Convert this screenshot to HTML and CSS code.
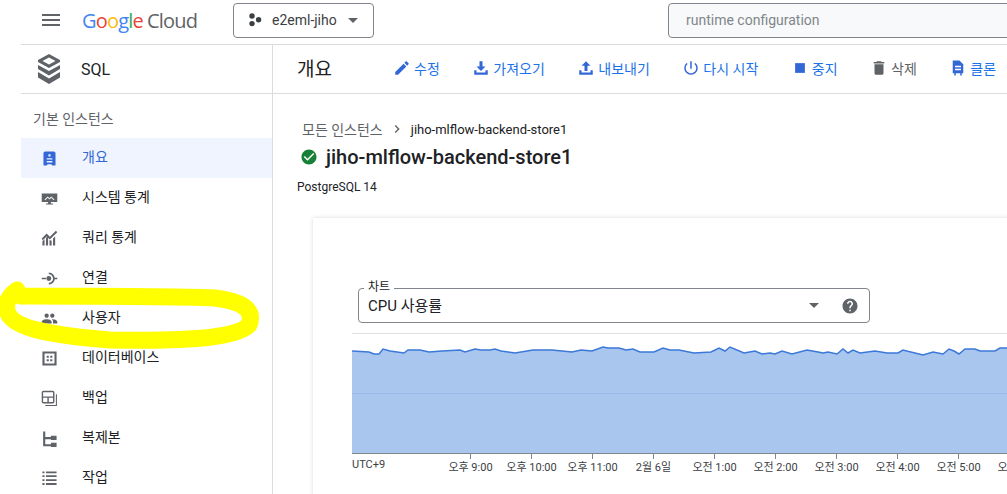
FILE: index.html
```html
<!DOCTYPE html>
<html lang="ko">
<head>
    <meta charset="UTF-8">
    <title>jiho-mlflow-backend-store1</title>
    <link rel="stylesheet" href="styles.css">
</head>
<body>
<div class="app">
    <header class="topbar">
        <svg class="menu-icon" viewBox="0 0 24 24"><path d="M3 18h18v-2H3v2zm0-5h18v-2H3v2zm0-7v2h18V6H3z"/></svg>
        <div class="logo">
            <span class="logo-google"><b class="c-blue">G</b><b class="c-red">o</b><b class="c-yellow">o</b><b class="c-blue">g</b><b class="c-green">l</b><b class="c-red">e</b></span>
            <span class="logo-cloud">Cloud</span>
        </div>
        <div class="project">
            <svg class="project-icon" viewBox="0 0 14 14"><circle cx="4" cy="3" r="2.7"/><circle cx="4" cy="10.600" r="2.7"/><circle cx="10.600" cy="6.800" r="2.7"/></svg>
            <span>e2eml-jiho</span>
            <i class="caret"></i>
        </div>
        <div class="search">runtime configuration</div>
    </header>

    <div class="subbar">
        <div class="product">
            <svg class="sql-icon" viewBox="0 0 22 30">
                <path d="M11 0l11 6v2L11 14 0 8V6zm0 3.500L4.500 7l6.500 3.500L17.500 7z" fill-rule="evenodd"/>
                <path d="M0 11l11 6 11-6v4L11 21.500 0 15z"/>
                <path d="M0 18l11 6.500L22 18v5.500L11 30 0 23.500z"/>
            </svg>
            <span>SQL</span>
        </div>
        <div class="toolbar">
            <h1>개요</h1>
            <div class="actions">
                <a class="action"><svg viewBox="0 0 24 24"><path d="M3 17.250V21h3.750L17.810 9.940l-3.750-3.750L3 17.250zM20.710 7.040c.39-.39.39-1.020 0-1.410l-2.340-2.340c-.39-.39-1.020-.39-1.410 0l-1.830 1.830 3.750 3.750 1.830-1.830z"/></svg><span>수정</span></a>
                <a class="action"><svg viewBox="0 0 24 24"><path d="M10 3h4v7h4l-6 6-6-6h4zM3 15h3v3h12v-3h3v6H3z"/></svg><span>가져오기</span></a>
                <a class="action"><svg viewBox="0 0 24 24"><path d="M12 3l6 6h-4v7h-4V9H6zM3 15h3v3h12v-3h3v6H3z"/></svg><span>내보내기</span></a>
                <a class="action"><svg viewBox="0 0 24 24"><path d="M13 3h-2v10h2V3zm4.830 2.170l-1.420 1.420C17.990 7.860 19 9.810 19 12c0 3.870-3.130 7-7 7s-7-3.130-7-7c0-2.190 1.010-4.140 2.580-5.420L6.170 5.170C4.230 6.820 3 9.260 3 12c0 4.970 4.030 9 9 9s9-4.030 9-9c0-2.740-1.230-5.180-3.170-6.830z"/></svg><span>다시 시작</span></a>
                <a class="action"><svg viewBox="0 0 24 24"><path d="M5.500 5.500h13v13h-13z"/></svg><span>중지</span></a>
                <a class="action disabled"><svg viewBox="0 0 24 24"><path d="M6 19c0 1.100.9 2 2 2h8c1.100 0 2-.9 2-2V7H6v12zM19 4h-3.500l-1-1h-5l-1 1H5v2h14V4z"/></svg><span>삭제</span></a>
                <a class="action"><svg viewBox="0 0 24 24"><path d="M5 2h9l5 5v12h-2v3h-2v-3H9v3H7v-3H5zM8 9v2h8V9zm0 4v2h8v-2z" fill-rule="evenodd"/></svg><span>클론</span></a>
            </div>
        </div>
    </div>

    <div class="content">
        <nav class="sidebar">
            <div class="nav-title">기본 인스턴스</div>
            <a class="nav-item active"><svg viewBox="0 0 24 24"><path d="M6 2h12a2.500 2.500 0 0 1 2.500 2.500V21a1 1 0 0 1-1 1H16l-1.500-2h-5L8 22H4.500a1 1 0 0 1-1-1V4.500A2.500 2.500 0 0 1 6 2zm4.500 4v3h3V6zM8 11.500v2h8v-2zM8 15.500v2h8v-2z" fill-rule="evenodd"/></svg><span>개요</span></a>
            <a class="nav-item"><svg viewBox="0 0 24 24"><path d="M1 5h22v12h-9v2h3v1.500H7V19h3v-2H1zm4 8.500l1 1 3.500-3.500 2.500 2.500 2.500-2.500 3.500 3.500 1-1-4.500-4.500-2.500 2.500L9.500 9z" fill-rule="evenodd"/></svg><span>시스템 통계</span></a>
            <a class="nav-item"><svg viewBox="0 0 24 24"><path d="M2 16l3-3v9H2zm5-5l3-2v13H7zm5 3l3 1v7h-3zm5-2l3-3v13h-3zM1 12l7-7 4.500 4.500L21 1l2 2-10.500 10.500L8 9l-5.500 5.500z"/></svg><span>쿼리 통계</span></a>
            <a class="nav-item"><svg viewBox="0 0 24 24"><path d="M1 11h6v2H1zm18 0h4v2h-4zM11 3.500a8.500 8.500 0 0 1 0 17V18a6 6 0 0 0 0-12zm0 5a3.500 3.500 0 1 1 0 7 3.500 3.500 0 0 1 0-7z"/></svg><span>연결</span></a>
            <a class="nav-item"><svg viewBox="0 0 24 24"><path d="M16 11c1.660 0 2.990-1.340 2.990-3S17.660 5 16 5c-1.660 0-3 1.340-3 3s1.340 3 3 3zm-8 0c1.660 0 2.990-1.340 2.990-3S9.660 5 8 5C6.340 5 5 6.340 5 8s1.340 3 3 3zm0 2c-2.330 0-7 1.170-7 3.500V19h14v-2.500c0-2.330-4.670-3.500-7-3.500zm8 0c-.29 0-.62.020-.97.050 1.160.84 1.970 1.970 1.970 3.450V19h6v-2.500c0-2.330-4.670-3.500-7-3.500z"/></svg><span>사용자</span></a>
            <a class="nav-item"><svg viewBox="0 0 24 24"><path d="M2 2h20v20H2zm3 3v14h14V5zm3 3h3v3H8zm5 0h3v3h-3zm-5 5h3v3H8zm5 0h3v3h-3z" fill-rule="evenodd"/></svg><span>데이터베이스</span></a>
            <a class="nav-item"><svg viewBox="0 0 24 24"><path d="M3.500 1h13A2.500 2.500 0 0 1 19 3.500v13a2.500 2.500 0 0 1-2.500 2.500h-13A2.500 2.500 0 0 1 1 16.500v-13A2.500 2.500 0 0 1 3.500 1zM3 3v6h14V3zm0 8v6h6v-6zm8 0v6h6v-6z" fill-rule="evenodd"/><path d="M21 6h1.500v16.500H6V21h15z"/></svg><span>백업</span></a>
            <a class="nav-item"><svg viewBox="0 0 24 24"><path d="M3 2h3v8h8V8h8v6h-8v-1H6v7h8v-2h8v6h-8v-1H3z"/></svg><span>복제본</span></a>
            <a class="nav-item"><svg viewBox="0 0 24 24"><path d="M2 2h3v2.500H2zm5 0h15v2.500H7zM2 7.500h3V10H2zm5 0h15V10H7zM2 13h3v2.500H2zm5 0h15v2.500H7zM2 18.500h3V21H2zm5 0h15V21H7z"/></svg><span>작업</span></a>
        </nav>

        <main class="main">
            <div class="crumbs">
                <span class="crumb-root">모든 인스턴스</span>
                <svg class="crumb-sep" viewBox="0 0 24 24"><path d="M8.590 16.590L13.170 12 8.590 7.410 10 6l6 6-6 6z"/></svg>
                <span class="crumb-current">jiho-mlflow-backend-store1</span>
            </div>
            <div class="title">
                <svg viewBox="0 0 24 24"><path d="M12 2C6.480 2 2 6.480 2 12s4.480 10 10 10 10-4.480 10-10S17.520 2 12 2zm-2 15l-5-5 1.410-1.410L10 14.170l7.590-7.590L19 8l-9 9z"/></svg>
                <h2>jiho-mlflow-backend-store1</h2>
            </div>
            <div class="version">PostgreSQL 14</div>

            <section class="card">
                <div class="select">
                    <span class="select-label">차트</span>
                    <span class="select-value">CPU 사용률</span>
                    <i class="caret"></i>
                    <svg class="help" viewBox="0 0 24 24"><path d="M12 2C6.480 2 2 6.480 2 12s4.480 10 10 10 10-4.480 10-10S17.520 2 12 2zm1 17h-2v-2h2v2zm2.070-7.750l-.9.920C13.450 12.900 13 13.500 13 15h-2v-.5c0-1.100.45-2.100 1.170-2.830l1.240-1.260c.37-.36.59-.86.59-1.410 0-1.100-.9-2-2-2s-2 .9-2 2H8c0-2.210 1.790-4 4-4s4 1.790 4 4c0 .88-.36 1.680-.93 2.250z"/></svg>
                </div>
                <div class="chart">
                    <svg class="plot" viewBox="352 334 655 119">
                        <path class="plot-area" d="M352 351L369 352L374 354L379 354L383 349L390 351L404 353L408 350L420 350L429 352L442 351L460 350L465 352L475 349L481 350L490 350L495 349L501 351L515 353L533 350L552 350L572 352L581 350L592 351L603 347L608 348L619 348L626 350L633 349L640 352L654 352L663 348L670 350L679 350L694 353L711 352L719 348L725 351L730 347L744 353L755 351L762 354L770 353L775 354L782 351L792 354L807 350L818 352L823 353L828 352L837 354L843 349L848 353L853 350L860 353L875 351L887 353L898 353L903 350L923 355L933 352L943 354L949 349L954 351L959 354L965 349L975 349L980 351L995 351L1000 348L1007 348V454H352Z"/>
                        <path class="plot-grid" d="M352 393.500H1007"/>
                        <path class="plot-line" d="M352 351L369 352L374 354L379 354L383 349L390 351L404 353L408 350L420 350L429 352L442 351L460 350L465 352L475 349L481 350L490 350L495 349L501 351L515 353L533 350L552 350L572 352L581 350L592 351L603 347L608 348L619 348L626 350L633 349L640 352L654 352L663 348L670 350L679 350L694 353L711 352L719 348L725 351L730 347L744 353L755 351L762 354L770 353L775 354L782 351L792 354L807 350L818 352L823 353L828 352L837 354L843 349L848 353L853 350L860 353L875 351L887 353L898 353L903 350L923 355L933 352L943 354L949 349L954 351L959 354L965 349L975 349L980 351L995 351L1000 348L1007 348"/>
                    </svg>
                    <div class="axis">
                        <span class="axis-zone">UTC+9</span>
                        <span class="tick">오후 9:00</span>
                        <span class="tick">오후 10:00</span>
                        <span class="tick">오후 11:00</span>
                        <span class="tick">2월 6일</span>
                        <span class="tick">오전 1:00</span>
                        <span class="tick">오전 2:00</span>
                        <span class="tick">오전 3:00</span>
                        <span class="tick">오전 4:00</span>
                        <span class="tick">오전 5:00</span>
                        <span class="tick">오전 6:00</span>
                    </div>
                </div>
            </section>
        </main>
    </div>
</div>

<!-- yellow marker drawn over the screenshot -->
<svg class="marker" viewBox="0 0 270 360"><path d="M20 296C90 296 170 296 215 298C247 302 254 312 249 325C235 340 170 341 110 340C60 336 10 330 7 310C5 302 9 296 17 290"/></svg>
</body>
</html>
```

FILE: styles.css
```css
* {
    margin: 0;
    padding: 0;
    box-sizing: border-box;
}

html,
body {
    height: 494px;
    overflow: hidden;
}

body {
    position: relative;
    background: #fff;
    color: #202124;
    font-family: Roboto, 'Noto Sans CJK KR', sans-serif;
    font-size: 13px;
}

.app {
    width: 986px;
    margin-left: 21px;
}

svg {
    display: block;
    flex: none;
    fill: #5f6368;
}

/* top bar */
.topbar {
    display: flex;
    align-items: center;
    height: 45px;
    padding: 0 0 4px 18px;
    border-bottom: 1px solid #dadce0;
}

.menu-icon {
    width: 24px;
    height: 24px;
}

.logo {
    display: flex;
    align-items: center;
    flex: none;
    gap: 4px;
    width: 151px;
    margin-left: 19px;
    font-family: 'Open Sans', sans-serif;
    font-size: 20px;
    letter-spacing: -0.8px;
}

.logo b {
    font-weight: 400;
}

.c-blue { color: #4285f4; }
.c-red { color: #ea4335; }
.c-yellow { color: #fbbc04; }
.c-green { color: #34a853; }

.logo-cloud {
    color: #5f6368;
}

.project {
    display: flex;
    align-items: center;
    flex: none;
    width: 141px;
    height: 35px;
    padding: 0 15px 0 14px;
    border: 1px solid #80868b;
    border-radius: 4px;
    color: #3c4043;
    font-size: 14px;
    white-space: nowrap;
}

.project-icon {
    width: 14px;
    height: 14px;
    margin-right: 10px;
    fill: #3c4043;
}

.caret {
    display: block;
    width: 0;
    height: 0;
    margin-left: auto;
    border-top: 5px solid #5f6368;
    border-left: 5px solid transparent;
    border-right: 5px solid transparent;
}

.search {
    flex: none;
    width: 400px;
    height: 35px;
    margin-left: 294px;
    padding-left: 17px;
    border: 1px solid #80868b;
    border-radius: 4px;
    background: #f8f9fa;
    color: #80868b;
    font-size: 14px;
    line-height: 33px;
}

/* second bar */
.subbar {
    display: flex;
    height: 49px;
    border-bottom: 1px solid #dadce0;
}

.product {
    display: flex;
    align-items: center;
    flex: none;
    width: 252px;
    padding-left: 17px;
    border-right: 1px solid #dadce0;
    font-size: 16px;
}

.sql-icon {
    width: 22px;
    height: 30px;
    margin-right: 21px;
    fill: #5f6368;
}

.toolbar {
    display: flex;
    align-items: center;
    padding: 0 0 3px 24px;
}

.toolbar h1 {
    width: 96px;
    font-size: 19px;
    font-weight: 400;
}

.actions {
    display: flex;
    gap: 32.5px;
}

.action {
    display: flex;
    align-items: center;
    gap: 3px;
    color: #1a73e8;
    font-size: 14px;
    white-space: nowrap;
}

.action svg {
    width: 18px;
    height: 18px;
    fill: #3367d6;
}

.action.disabled {
    color: #5f6368;
}

.action.disabled svg {
    fill: #5f6368;
}

/* content */
.content {
    display: flex;
}

.sidebar {
    flex: none;
    width: 252px;
    height: 400px;
    border-right: 1px solid #dadce0;
}

.nav-title {
    height: 44px;
    padding: 14px 0 0 12px;
    color: #5f6368;
    font-size: 14px;
}

.nav-item {
    display: flex;
    align-items: center;
    gap: 24px;
    height: 40px;
    padding-left: 20px;
    font-size: 14px;
}

.nav-item span {
    padding-bottom: 4px;
}

.nav-item svg {
    width: 17px;
    height: 17px;
}

.nav-item.active {
    background: #f0f4fe;
    color: #3367d6;
}

.nav-item.active svg {
    fill: #3367d6;
}

.main {
    flex: none;
    width: 734px;
    padding-left: 24px;
}

.crumbs {
    display: flex;
    align-items: center;
    gap: 6px;
    height: 20px;
    margin: 25px 0 0 5px;
    color: #5f6368;
    font-size: 14px;
}

.crumb-current {
    color: #202124;
    font-size: 13px;
}

.crumb-sep {
    width: 16px;
    height: 16px;
}

.title {
    display: flex;
    align-items: center;
    gap: 8px;
    height: 28px;
    margin: 4px 0 0 3px;
}

.title svg {
    width: 18px;
    height: 18px;
    fill: #188038;
}

.title h2 {
    font-size: 20px;
    font-weight: 500;
}

.version {
    height: 18px;
    margin-top: 7px;
    font-size: 12px;
    line-height: 18px;
}

.card {
    width: 760px;
    height: 300px;
    margin: 22px 0 0 16px;
    padding: 70px 0 0 39px;
    box-shadow: 0 0 4px rgba(60, 64, 67, 0.2);
}

.select {
    position: relative;
    display: flex;
    align-items: center;
    width: 512px;
    height: 35px;
    margin-left: 6px;
    padding: 0 10px 0 9px;
    border: 1px solid #80868b;
    border-radius: 4px;
}

.select-label {
    position: absolute;
    top: -9px;
    left: 5px;
    padding: 0 4px;
    background: #fff;
    font-size: 12px;
    line-height: 14px;
}

.select-value {
    padding-bottom: 3px;
    font-size: 15px;
}

.select .caret {
    margin-right: 22px;
}

.help {
    width: 18px;
    height: 18px;
}

.chart {
    margin-top: 10px;
    border-top: 1px solid #e0e0e0;
}

.plot {
    width: 655px;
    height: 119px;
}

.plot-area {
    fill: #a8c6ee;
}

.plot-grid {
    fill: none;
    stroke: #9bbce8;
}

.plot-line {
    fill: none;
    stroke: #3b78d8;
    stroke-width: 1.5;
}

.axis {
    display: flex;
    height: 26px;
    border-top: 1px solid #80868b;
    color: #3c4043;
    font-size: 11px;
    white-space: nowrap;
}

.axis-zone {
    flex: none;
    width: 88px;
    padding-top: 4px;
}

.tick {
    position: relative;
    flex: none;
    width: 61px;
    padding-top: 4px;
    text-align: center;
}

.tick::before {
    content: '';
    position: absolute;
    top: 0;
    left: 30px;
    width: 1px;
    height: 5px;
    background: #80868b;
}

/* marker scribble over the nav */
.marker {
    position: absolute;
    top: 0;
    left: 0;
    width: 270px;
    height: 360px;
}

.marker path {
    fill: none;
    stroke: #ffff00;
    stroke-width: 17;
    stroke-linecap: round;
    stroke-linejoin: round;
}
```
